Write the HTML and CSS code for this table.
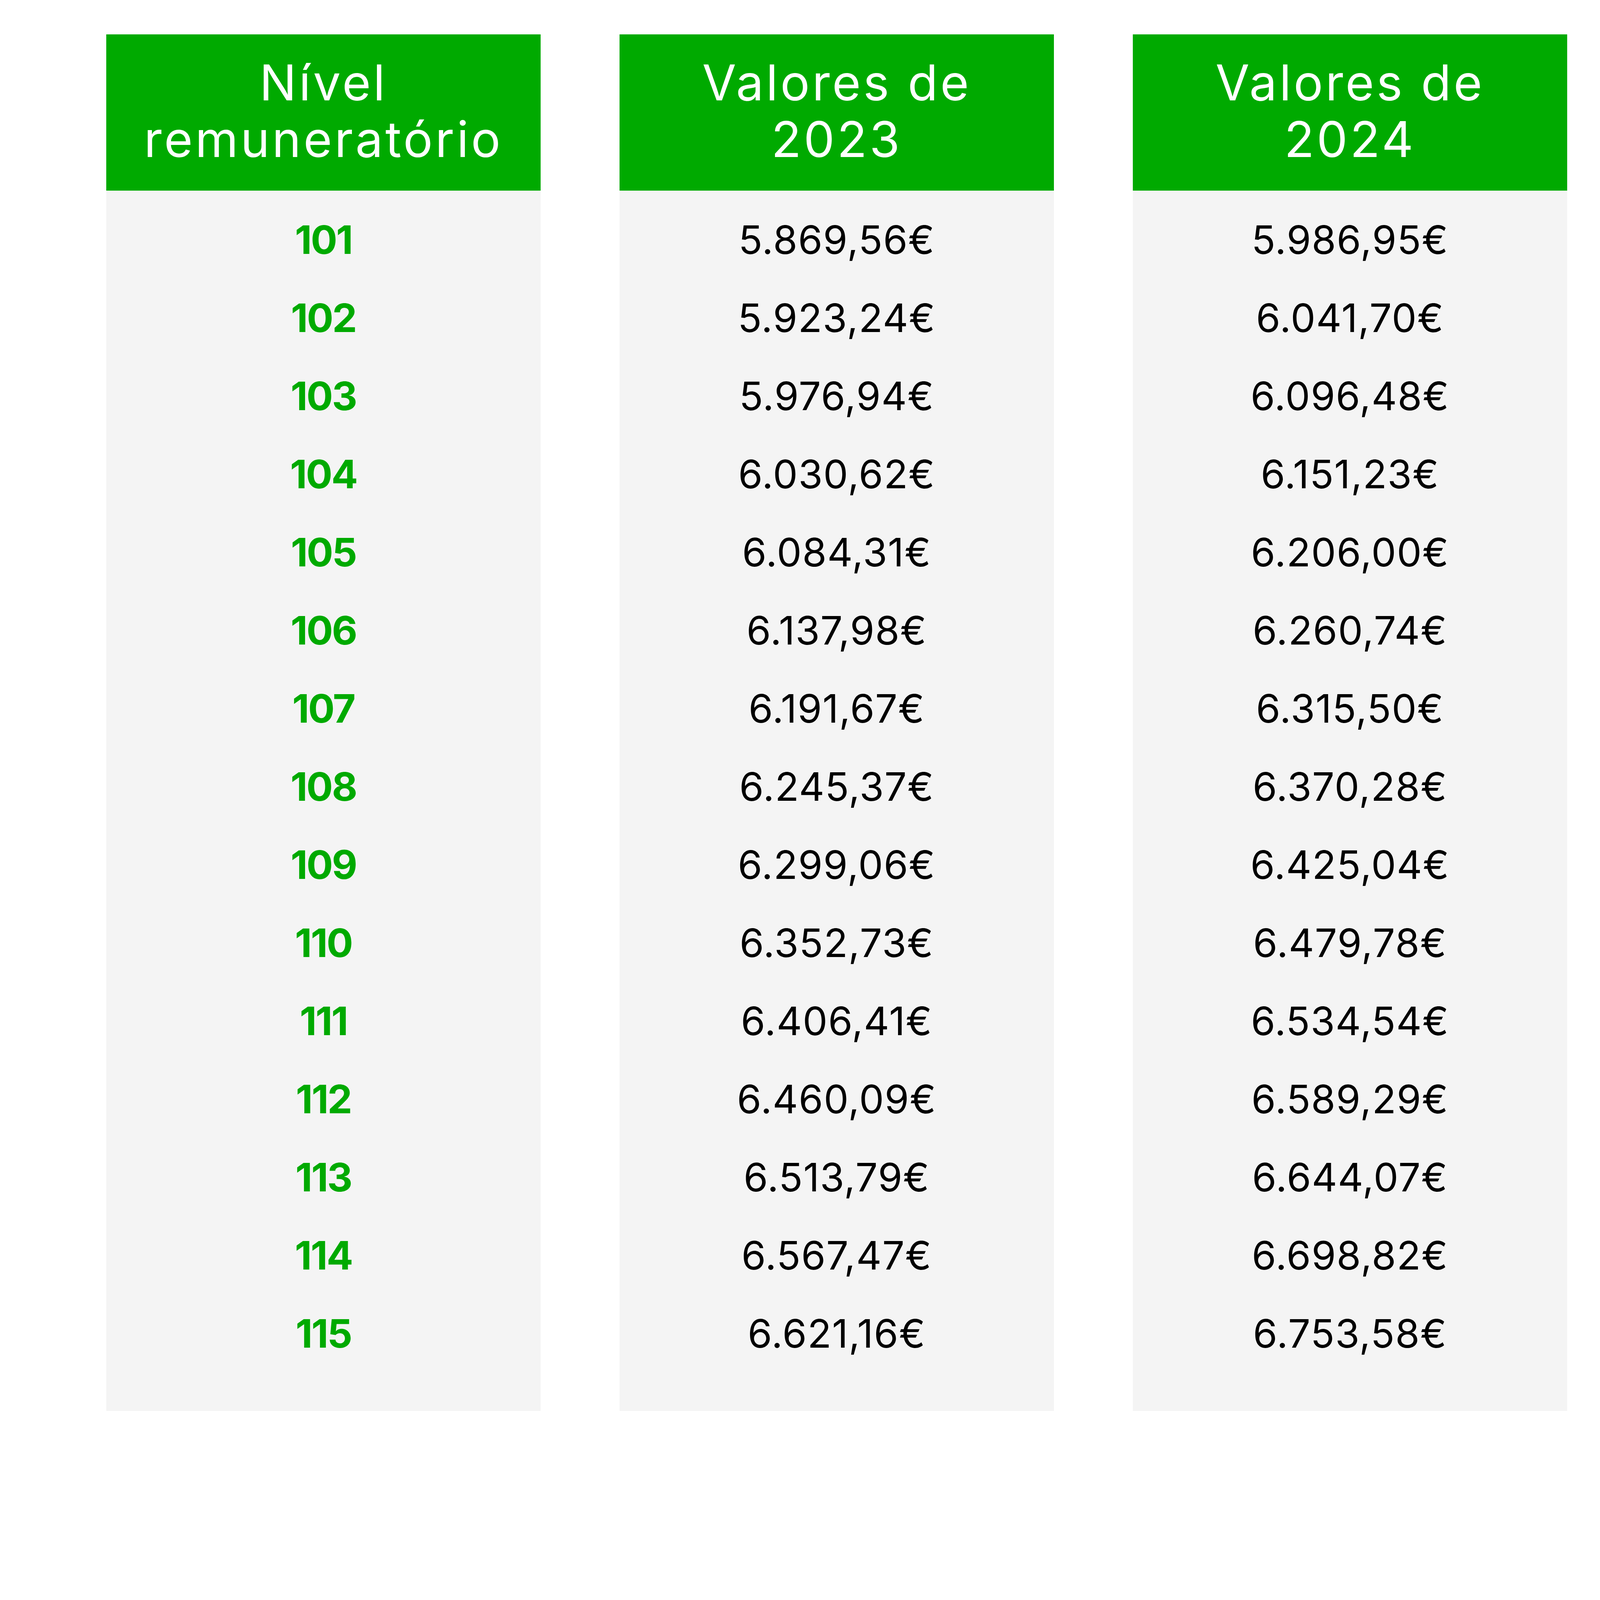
FILE: index.html
```html
<!DOCTYPE html>
<html lang="pt">
<head>
<meta charset="utf-8">
<title>Níveis remuneratórios</title>
<link rel="stylesheet" href="styles.css">
</head>
<body>
<div class="table">
  <div class="col">
    <div class="head">Nível<br>remuneratório</div>
    <div class="body">
      <div class="cell level">101</div>
      <div class="cell level">102</div>
      <div class="cell level">103</div>
      <div class="cell level">104</div>
      <div class="cell level">105</div>
      <div class="cell level">106</div>
      <div class="cell level">107</div>
      <div class="cell level">108</div>
      <div class="cell level">109</div>
      <div class="cell level">110</div>
      <div class="cell level">111</div>
      <div class="cell level">112</div>
      <div class="cell level">113</div>
      <div class="cell level">114</div>
      <div class="cell level">115</div>
    </div>
  </div>
  <div class="col">
    <div class="head">Valores de<br>2023</div>
    <div class="body">
      <div class="cell">5.869,56€</div>
      <div class="cell">5.923,24€</div>
      <div class="cell">5.976,94€</div>
      <div class="cell">6.030,62€</div>
      <div class="cell">6.084,31€</div>
      <div class="cell">6.137,98€</div>
      <div class="cell">6.191,67€</div>
      <div class="cell">6.245,37€</div>
      <div class="cell">6.299,06€</div>
      <div class="cell">6.352,73€</div>
      <div class="cell">6.406,41€</div>
      <div class="cell">6.460,09€</div>
      <div class="cell">6.513,79€</div>
      <div class="cell">6.567,47€</div>
      <div class="cell">6.621,16€</div>
    </div>
  </div>
  <div class="col">
    <div class="head">Valores de<br>2024</div>
    <div class="body">
      <div class="cell">5.986,95€</div>
      <div class="cell">6.041,70€</div>
      <div class="cell">6.096,48€</div>
      <div class="cell">6.151,23€</div>
      <div class="cell">6.206,00€</div>
      <div class="cell">6.260,74€</div>
      <div class="cell">6.315,50€</div>
      <div class="cell">6.370,28€</div>
      <div class="cell">6.425,04€</div>
      <div class="cell">6.479,78€</div>
      <div class="cell">6.534,54€</div>
      <div class="cell">6.589,29€</div>
      <div class="cell">6.644,07€</div>
      <div class="cell">6.698,82€</div>
      <div class="cell">6.753,58€</div>
    </div>
  </div>
</div>
</body>
</html>
```
FILE: styles.css
```css
html, body {
  margin: 0;
  padding: 0;
  background: #ffffff;
}
body {
  font-family: Inter, "Noto Sans", "Liberation Sans", sans-serif;
}
.table {
  display: flex;
  gap: 202px;
  padding: 88px 0 0 272px;
}
.col {
  width: 1112px;
  display: flex;
  flex-direction: column;
}
.head {
  height: 400px;
  background: #00aa00;
  color: #ffffff;
  display: flex;
  align-items: center;
  justify-content: center;
  text-align: center;
  font-size: 126px;
  line-height: 145px;
  letter-spacing: 6px;
  font-weight: 400;
  padding-bottom: 8px;
  box-sizing: border-box;
}
.body {
  background: #f4f4f4;
  height: 3124px;
  padding-top: 25px;
  box-sizing: border-box;
}
.cell {
  height: 200px;
  display: flex;
  align-items: center;
  justify-content: center;
  font-size: 101px;
  letter-spacing: 1.5px;
  color: #000000;
  font-weight: 400;
}
.cell.level {
  color: #00aa00;
  font-weight: 700;
  letter-spacing: -3px;
}
```
